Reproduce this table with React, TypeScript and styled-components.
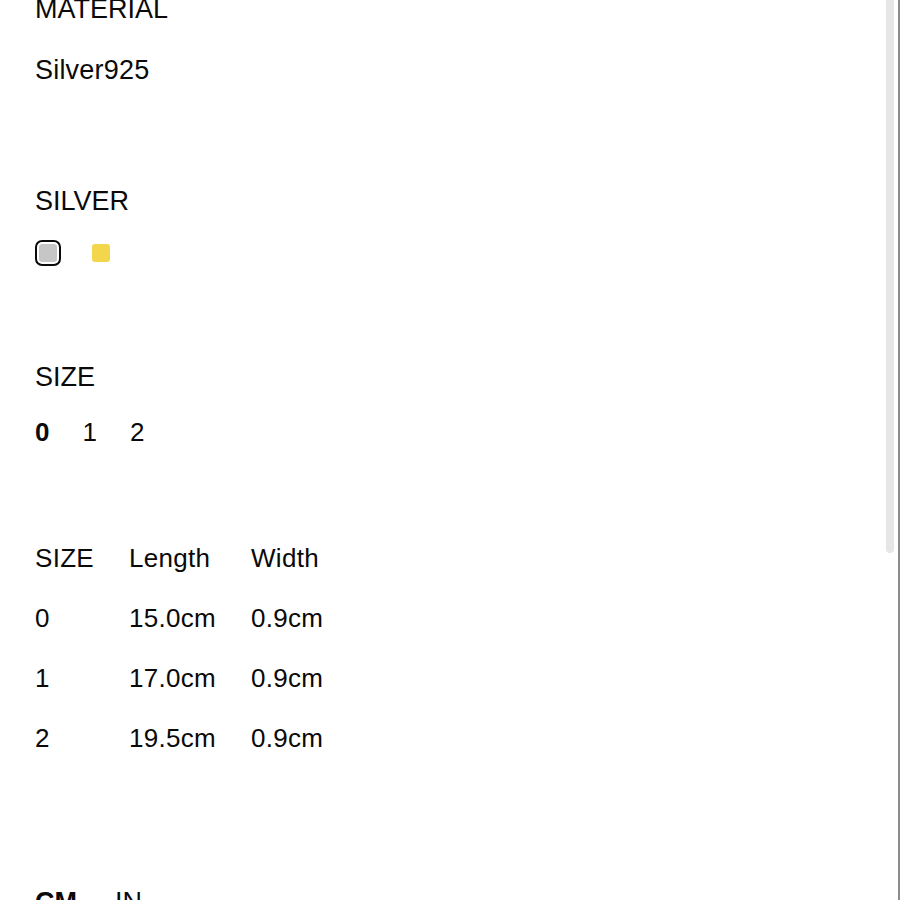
import styled, { createGlobalStyle } from "styled-components";

const GlobalStyle = createGlobalStyle`
    html, body {
        margin: 0;
        padding: 0;
        background: #ffffff;
        overflow: hidden;
        height: 900px;
    }
    body {
        font-family: "Liberation Sans", Arial, sans-serif;
        color: #0a0a0a;
    }
`

const Page = styled.div`
    position: relative;
    width: 900px;
    height: 900px;
    overflow: hidden;
    padding-left: 35px;
    box-sizing: border-box;
`

const Content = styled.div`
    display: flex;
    flex-direction: column;
    margin-top: -6px;
`

const Section = styled.section<{ $gap: number; $after: number }>`
    display: flex;
    flex-direction: column;
    gap: ${p => p.$gap}px;
    margin-bottom: ${p => p.$after}px;
`

const Label = styled.div`
    font-size: 27px;
    line-height: 30px;
`

const Value = styled(Label)`
    letter-spacing: 0.2px;
`

const SwatchRow = styled.div`
    display: flex;
    align-items: center;
    gap: 31px;
    height: 26px;
`

const Swatch = styled.span<{ $color: string; $selected?: boolean }>`
    box-sizing: border-box;
    display: block;
    background: ${p => p.$color};
    ${p => p.$selected ? `
        width: 26px;
        height: 26px;
        border-radius: 7px;
        border: 2px solid #0a0a0a;
        box-shadow: inset 0 0 0 2px #fff;
    ` : `
        width: 18px;
        height: 18px;
        border-radius: 3px;
    `}
`

const Options = styled.div`
    display: flex;
    gap: 33px;
`

const Option = styled.span<{ $active?: boolean }>`
    font-size: 26px;
    line-height: 30px;
    font-weight: ${p => p.$active ? 700 : 400};
`

const SizeTable = styled.div`
    display: grid;
    grid-template-columns: 94px 122px auto;
    row-gap: 30px;
    font-size: 26px;
    line-height: 30px;
    letter-spacing: 0.3px;
`

const Units = styled.div`
    display: flex;
    gap: 38px;
`

const Unit = styled.span<{ $active?: boolean }>`
    font-size: 27px;
    line-height: 30px;
    font-weight: ${p => p.$active ? 700 : 400};
`

const ScrollThumb = styled.div`
    position: absolute;
    top: 0;
    left: 886px;
    width: 8px;
    height: 553px;
    background: #e6e6e6;
    border-radius: 0 0 4px 4px;
`

const EdgeLine = styled.div`
    position: absolute;
    top: 0;
    right: 0;
    width: 2px;
    height: 900px;
    background: #8c8c8c;
`

const rows = [
    ["0", "15.0cm", "0.9cm"],
    ["1", "17.0cm", "0.9cm"],
    ["2", "19.5cm", "0.9cm"],
]

export default function App() {
    return (
        <>
            <GlobalStyle />
            <Page>
                <Content>
                    <Section $gap={31} $after={101}>
                        <Label>MATERIAL</Label>
                        <Value>Silver925</Value>
                    </Section>
                    <Section $gap={24} $after={96}>
                        <Label>SILVER</Label>
                        <SwatchRow>
                            <Swatch $color="#c6c6c6" $selected />
                            <Swatch $color="#f3d64c" />
                        </SwatchRow>
                    </Section>
                    <Section $gap={25} $after={96}>
                        <Label>SIZE</Label>
                        <Options>
                            <Option $active>0</Option>
                            <Option>1</Option>
                            <Option>2</Option>
                        </Options>
                    </Section>
                    <Section $gap={0} $after={134}>
                        <SizeTable>
                            <span>SIZE</span>
                            <span>Length</span>
                            <span>Width</span>
                            {rows.map(r => r.map((c, i) => <span key={r[0] + i}>{c}</span>))}
                        </SizeTable>
                    </Section>
                    <Units>
                        <Unit $active>CM</Unit>
                        <Unit>IN</Unit>
                    </Units>
                </Content>
                <ScrollThumb />
                <EdgeLine />
            </Page>
        </>
    )
}
